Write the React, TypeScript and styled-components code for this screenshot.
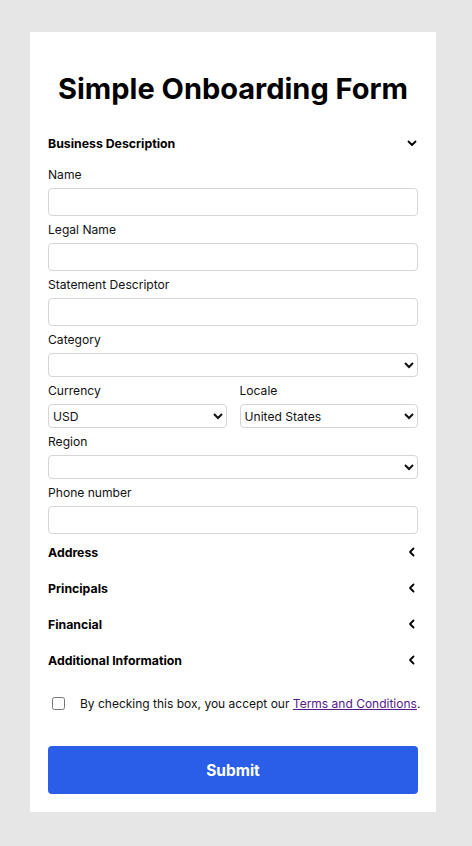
import React from "react";
import styled, { createGlobalStyle } from "styled-components";

const Global = createGlobalStyle`
  html, body { margin: 0; padding: 0; background: #e6e6e6; }
  body { font-family: Inter, "Liberation Sans", Arial, sans-serif; color: #111; }
  * { box-sizing: border-box; }
`;

const Page = styled.div`
  padding: 32px 30px 35px 30px;
  min-height: 846px;
`;

const Card = styled.form`
  width: 406px;
  background: #fff;
  padding: 18px;
  display: flex;
  flex-direction: column;
`;

const Title = styled.h1`
  margin: 21px 0 18px;
  font-size: 29px;
  line-height: 36px;
  font-weight: 700;
  text-align: center;
  color: #000;
`;

const SectionHeader = styled.div`
  height: 36px;
  display: flex;
  align-items: center;
  justify-content: space-between;
  font-size: 12.3px;
  font-weight: 700;
  color: #000;
`;

const Chevron = styled.svg`
  width: 10px;
  height: 10px;
  margin-right: 1px;
`;

const Fields = styled.div`
  padding-top: 6px;
  display: flex;
  flex-direction: column;
  gap: 6px;
`;

const Field = styled.div`
  display: flex;
  flex-direction: column;
  gap: 5px;
  flex: 1;
  min-width: 0;
`;

const Row = styled.div`
  display: flex;
  gap: 13px;
`;

const Label = styled.label`
  font-size: 12.1px;
  line-height: 16px;
  color: #111;
`;

const TextInput = styled.input`
  height: 28px;
  width: 100%;
  border: 1px solid #d6d6d6;
  border-radius: 4px;
  font-family: inherit;
  font-size: 13px;
  padding: 0 6px;
  background: #fff;
`;

const Select = styled.select`
  height: 24px;
  width: 100%;
  border: 1px solid #d6d6d6;
  border-radius: 4px;
  font-family: inherit;
  font-size: 12.1px;
  color: #111;
  background: #fff;
  padding: 0;
`;

const Agree = styled.div`
  margin-top: 16px;
  display: flex;
  align-items: center;
  gap: 12px;
  font-size: 12px;
  line-height: 16px;
  color: #111;
  white-space: nowrap;
  input { margin: 3px 3px 3px 4px; width: 13px; height: 13px; }
`;

const Link = styled.a`
  color: #551a8b;
  text-decoration: underline;
`;

const Submit = styled.button`
  margin-top: 33px;
  height: 48px;
  width: 100%;
  border: none;
  border-radius: 4px;
  background: #2a5ee8;
  color: #fff;
  font-family: inherit;
  font-size: 15.5px;
  font-weight: 700;
`;

const Down = () => (
  <Chevron viewBox="0 0 10 10">
    <polyline points="1.5,3.5 5,7 8.5,3.5" fill="none" stroke="#000" strokeWidth="1.8" strokeLinecap="round" strokeLinejoin="round" />
  </Chevron>
);

const Left = () => (
  <Chevron viewBox="0 0 10 10">
    <polyline points="6.5,1.5 3,5 6.5,8.5" fill="none" stroke="#000" strokeWidth="1.8" strokeLinecap="round" strokeLinejoin="round" />
  </Chevron>
);

export default function App() {
  return (
    <>
      <Global />
      <Page>
        <Card onSubmit={(e) => e.preventDefault()}>
          <Title>Simple Onboarding Form</Title>
          <SectionHeader>
            <span>Business Description</span>
            <Down />
          </SectionHeader>
          <Fields>
            <Field>
              <Label>Name</Label>
              <TextInput />
            </Field>
            <Field>
              <Label>Legal Name</Label>
              <TextInput />
            </Field>
            <Field>
              <Label>Statement Descriptor</Label>
              <TextInput />
            </Field>
            <Field>
              <Label>Category</Label>
              <Select defaultValue="">
                <option value=""></option>
              </Select>
            </Field>
            <Row>
              <Field>
                <Label>Currency</Label>
                <Select defaultValue="USD">
                  <option value="USD">USD</option>
                </Select>
              </Field>
              <Field>
                <Label>Locale</Label>
                <Select defaultValue="US">
                  <option value="US">United States</option>
                </Select>
              </Field>
            </Row>
            <Field>
              <Label>Region</Label>
              <Select defaultValue="">
                <option value=""></option>
              </Select>
            </Field>
            <Field>
              <Label>Phone number</Label>
              <TextInput type="tel" />
            </Field>
          </Fields>
          {["Address", "Principals", "Financial", "Additional Information"].map((s) => (
            <SectionHeader key={s}>
              <span>{s}</span>
              <Left />
            </SectionHeader>
          ))}
          <Agree>
            <input type="checkbox" />
            <span>
              By checking this box, you accept our <Link href="#">Terms and Conditions</Link>.
            </span>
          </Agree>
          <Submit type="submit">Submit</Submit>
        </Card>
      </Page>
    </>
  );
}
